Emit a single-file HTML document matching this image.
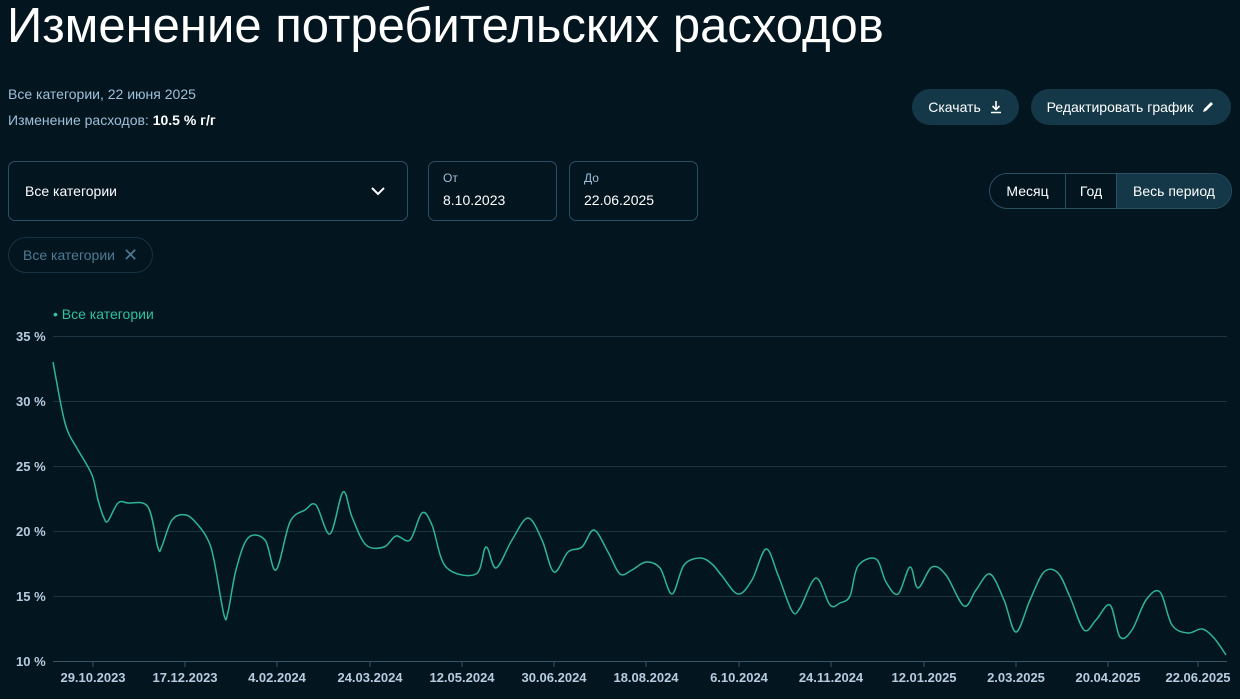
<!DOCTYPE html>
<html><head><meta charset="utf-8"><style>
*{box-sizing:border-box;margin:0;padding:0}
body{width:1240px;height:699px;background:#03151f;color:#fff;font-family:"Liberation Sans",sans-serif;position:relative;overflow:hidden}
.a{position:absolute}
h1{position:absolute;left:7px;top:-2px;font-size:49px;font-weight:400;line-height:56px;color:#fff;white-space:nowrap}
.sub{font-size:14px;color:#9fc0d8}
.btn{position:absolute;top:89px;height:36px;border-radius:18px;background:#143847;color:#fff;font-size:14px;display:flex;align-items:center;justify-content:center;gap:8px}
.box{position:absolute;border:1px solid #2a4f63;border-radius:7px}
.sm{font-size:12px;color:#9fc0d8;position:absolute}
.yl{position:absolute;left:16px;font-size:13px;color:#b8cce0;font-weight:bold}
.xl{position:absolute;top:670px;font-size:13px;color:#b8cce0;font-weight:bold;transform:translateX(-50%);white-space:nowrap}
</style></head><body>
<h1>Изменение потребительских расходов</h1>
<div class="a sub" style="left:8px;top:86px">Все категории, 22 июня 2025</div>
<div class="a sub" style="left:8px;top:112px">Изменение расходов: <b style="color:#fff">10.5 % г/г</b></div>
<div class="btn" style="left:912px;width:107px">Скачать <svg width="14" height="14" viewBox="0 0 14 14"><path d="M7 1v8M3.5 6L7 9.5 10.5 6M2 12.5h10" stroke="#fff" stroke-width="1.6" fill="none"/></svg></div>
<div class="btn" style="left:1031px;width:200px">Редактировать график <svg width="14" height="14" viewBox="0 0 14 14"><path d="M2 12l1-3 7-7 2 2-7 7z" fill="#fff"/></svg></div>
<div class="box" style="left:8px;top:161px;width:400px;height:60px"><span class="a" style="left:16px;top:21px;font-size:14px">Все категории</span><svg class="a" style="left:361px;top:23px" width="16" height="12" viewBox="0 0 16 12"><path d="M2 3l6 6 6-6" stroke="#fff" stroke-width="2" fill="none"/></svg></div>
<div class="box" style="left:428px;top:161px;width:129px;height:60px"><span class="sm" style="left:14px;top:9px">От</span><span class="a" style="left:14px;top:30px;font-size:14px">8.10.2023</span></div>
<div class="box" style="left:569px;top:161px;width:129px;height:60px"><span class="sm" style="left:14px;top:9px">До</span><span class="a" style="left:14px;top:30px;font-size:14px">22.06.2025</span></div>
<div class="a" style="left:989px;top:173px;width:243px;height:36px;border:1px solid #2a4f63;border-radius:18px;overflow:hidden;display:flex;font-size:14px">
<div style="width:76px;display:flex;align-items:center;justify-content:center;border-right:1px solid #2a4f63">Месяц</div>
<div style="width:51px;display:flex;align-items:center;justify-content:center;border-right:1px solid #2a4f63">Год</div>
<div style="flex:1;display:flex;align-items:center;justify-content:center;background:#143847">Весь период</div></div>
<div class="a" style="left:8px;top:237px;width:145px;height:36px;border:1px solid #163343;border-radius:18px;color:#4f7a92;font-size:14px;display:flex;align-items:center;padding-left:14px">Все категории <span style="margin-left:8px;font-size:18px">✕</span></div>
<div class="a" style="left:53px;top:306px;font-size:14px;color:#2fc29e">• Все категории</div>
<div class="yl" style="top:329px">35 %</div><div class="yl" style="top:394px">30 %</div><div class="yl" style="top:459px">25 %</div><div class="yl" style="top:524px">20 %</div><div class="yl" style="top:589px">15 %</div><div class="yl" style="top:654px">10 %</div>
<svg class="a" style="left:0;top:0" width="1240" height="699">
<g stroke="#1d3442" stroke-width="1"><path d="M53 336.5H1227M53 401.5H1227M53 466.5H1227M53 531.5H1227M53 596.5H1227"/></g>
<path d="M53 661.5H1227" stroke="#3a5566"/>
<g stroke="#3a5566"><path d="M93 661v6M185 661v6M277 661v6M370 661v6M462 661v6M554 661v6M646 661v6M739 661v6M831 661v6M924 661v6M1016 661v6M1108 661v6M1198 661v6"/></g>
<path id="ln" fill="none" stroke="#2fb596" stroke-width="1.5" stroke-linejoin="round" d=""/>
</svg>
<div class="xl" style="left:93px">29.10.2023</div><div class="xl" style="left:185px">17.12.2023</div><div class="xl" style="left:277px">4.02.2024</div><div class="xl" style="left:370px">24.03.2024</div><div class="xl" style="left:462px">12.05.2024</div><div class="xl" style="left:554px">30.06.2024</div><div class="xl" style="left:646px">18.08.2024</div><div class="xl" style="left:739px">6.10.2024</div><div class="xl" style="left:831px">24.11.2024</div><div class="xl" style="left:924px">12.01.2025</div><div class="xl" style="left:1016px">2.03.2025</div><div class="xl" style="left:1108px">20.04.2025</div><div class="xl" style="left:1198px">22.06.2025</div>
<script>
var s="53,362 62,410 68,432 78,450 92,475 98,500 104,518 108,521 118,503 128,503 148,507 158,548 162,546 172,520 186,515 198,525 208,540 214,560 224,615 228,612 236,570 248,538 265,540 276,570 290,522 305,510 316,505 330,534 343,492 352,517 366,545 384,547 396,536 410,540 422,513 432,525 446,567 476,574 486,547 496,568 512,540 528,518 542,540 554,572 568,552 582,547 594,530 608,552 620,574 632,570 646,562 660,568 672,594 684,565 700,558 712,564 722,576 738,594 752,580 766,549 778,575 792,611 800,608 816,578 830,605 840,603 850,596 858,566 876,559 886,582 898,594 910,567 918,588 932,567 946,575 964,606 976,590 990,574 1004,600 1016,632 1030,600 1044,572 1058,573 1070,597 1084,630 1096,620 1110,605 1120,637 1132,630 1146,600 1160,592 1172,625 1188,633 1202,629 1214,638 1226,655";
var p=s.split(" ").map(function(t){return t.split(",").map(Number)});
var d="M"+p[0][0]+" "+p[0][1];
for(var i=0;i<p.length-1;i++){var a=p[i-1]||p[i],b=p[i],c=p[i+1],e=p[i+2]||c;
d+=" C"+(b[0]+(c[0]-a[0])/6)+" "+(b[1]+(c[1]-a[1])/6)+" "+(c[0]-(e[0]-b[0])/6)+" "+(c[1]-(e[1]-b[1])/6)+" "+c[0]+" "+c[1];}
document.getElementById("ln").setAttribute("d",d);
</script>
</body></html>
